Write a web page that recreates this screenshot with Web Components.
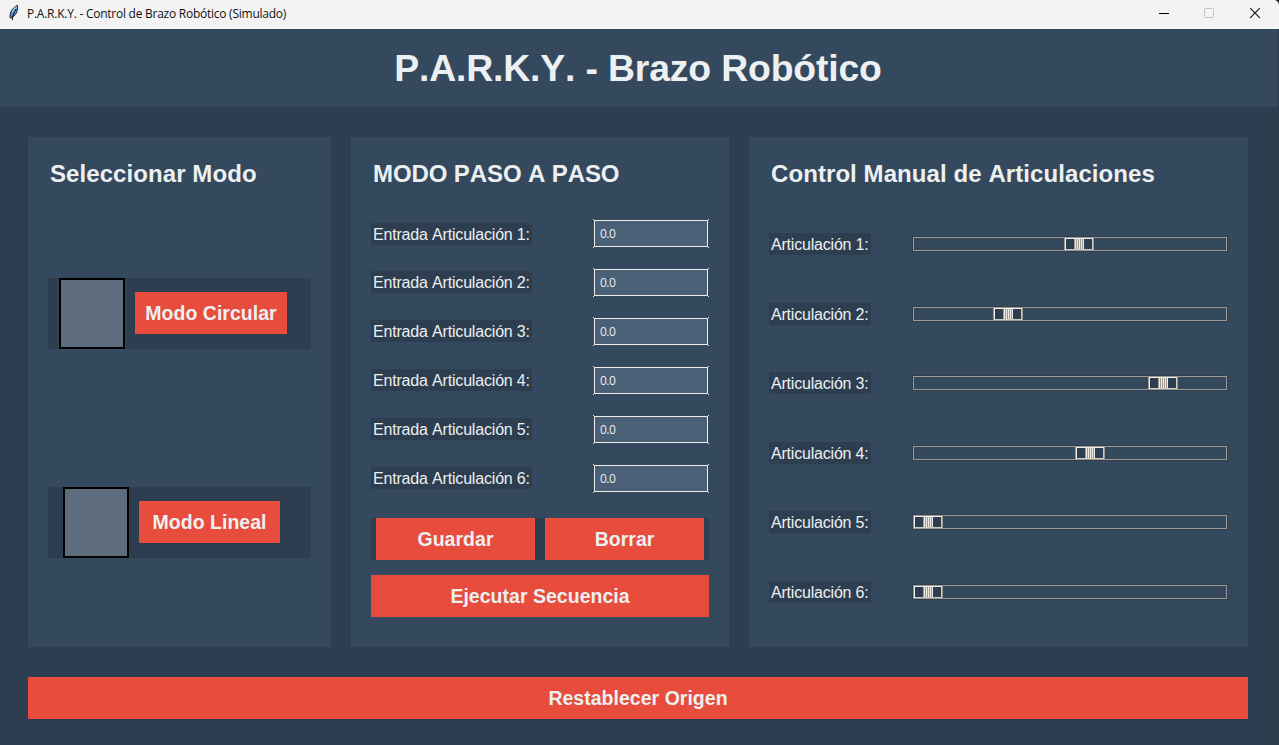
<!DOCTYPE html>
<html lang="es">
<head>
<meta charset="utf-8">
<title>P.A.R.K.Y. - Control de Brazo Robótico (Simulado)</title>
<style>
html,body{margin:0;height:100%;overflow:hidden;background:#2c3e50}
body{font-family:"Liberation Sans",Arial,sans-serif;color:#ecf0f1;font-kerning:none}
</style>
</head>
<body>
<parky-app></parky-app>
<script>
function define(name, html, setup) {
  const template = document.createElement('template');
  template.innerHTML = html;
  customElements.define(name, class extends HTMLElement {
    connectedCallback() {
      if (this.shadowRoot) return;
      this.attachShadow({ mode: 'open' }).append(template.content.cloneNode(true));
      if (setup) setup(this, this.shadowRoot);
    }
  });
}

define('window-bar', `
<style>
:host{display:flex;height:29px;background:#f3f3f3;color:#111;align-items:flex-start;font:12px/28px "Open Sans","Noto Sans",sans-serif;font-kerning:auto}
.feather{margin:4px 0 0 7px;width:14px;height:18px;flex:none}
.title{margin-left:6px;flex:1;white-space:nowrap;letter-spacing:-.25px}
.controls{width:124px;height:29px;flex:none}
</style>
<svg class="feather" viewBox="0 0 14 18"><path d="M3.2 14C2.500 10 4 5 10.300 1.300C11.500 5 9.500 10.500 5.500 13.300Z" fill="#4f94d8" stroke="#1d1d22" stroke-width="1"/><path d="M5.500 8.500C6.500 6 8 4 9.600 2.800" stroke="#a7d0f5" stroke-width="1.400" fill="none"/><path d="M5.300 16.200C5.400 12 7 8 9 5" stroke="#15151a" stroke-width="1" fill="none"/></svg>
<span class="title"><slot></slot></span>
<svg class="controls" viewBox="0 0 124 29"><path d="M4 13.500h10" stroke="#000"/><rect x="49.500" y="8.500" width="9" height="9" rx="1" fill="none" stroke="#c4c4c4"/><path d="M95.200 8.200l9.600 9.600m0-9.600l-9.600 9.600" stroke="#111" stroke-width="1.100"/><path d="M120 0h4v5Q123.500 1 120 0z" fill="#222"/></svg>
`);

define('app-header', `
<style>
:host{display:flex;height:78px;background:#34495e;align-items:center;justify-content:center;padding-right:3px}
h1{margin:0;font-size:37.33px;line-height:42px;white-space:nowrap;letter-spacing:-.15px}
</style><h1><slot></slot></h1>`);

define('card-panel', `
<style>
:host{display:flex;flex-direction:column;background:#34495e;padding:0 20px;box-sizing:border-box;height:510px}
h2{margin:23px 0 0 2px;height:28px;font-size:24px;line-height:28px;white-space:nowrap;letter-spacing:var(--heading-spacing,.08px)}
</style><h2><slot name="heading"></slot></h2><slot></slot>`);

define('red-button', `
<style>
:host{display:flex;box-sizing:border-box;height:42px;background:#e74c3c;align-items:center;justify-content:center;font-weight:bold;font-size:19.5px;line-height:22px;white-space:nowrap;letter-spacing:.02px}
</style><span><slot></slot></span>`);

define('mode-row', `
<style>
:host{display:flex;height:71px;box-sizing:border-box;background:#2c3e50;align-items:flex-start;gap:10px;padding-left:var(--inset,11px)}
.lamp{box-sizing:border-box;width:66px;height:71px;border:2px solid #000;background:#5d6d7e;flex:none}
::slotted(red-button){margin-top:14px}
</style><div class="lamp"></div><slot></slot>`);

define('dark-label', `
<style>
:host{display:block;box-sizing:border-box;height:22px;padding-left:2px;background:#2c3e50;font-size:16px;line-height:24px;white-space:nowrap}
</style><slot></slot>`);

define('entry-row', `
<style>
:host{display:flex;justify-content:space-between;height:29px;align-items:flex-start}
dark-label{width:161px;margin-top:var(--label-top,3px);letter-spacing:-.18px}
.entry{box-sizing:border-box;width:116px;height:29px;padding:1px;
background:linear-gradient(#ecf0f1,#ecf0f1) 0 0/1px 1px no-repeat,linear-gradient(#ecf0f1,#ecf0f1) 100% 0/1px 1px no-repeat,linear-gradient(#ecf0f1,#ecf0f1) 0 100%/1px 1px no-repeat,linear-gradient(#ecf0f1,#ecf0f1) 100% 100%/1px 1px no-repeat}
.field{box-sizing:border-box;height:27px;border:1px solid #f0ece6;background:#4a6077;padding-left:5px;font:12px/25px "Open Sans","Noto Sans",sans-serif;letter-spacing:-.5px}
</style><dark-label><slot></slot></dark-label><div class="entry"><div class="field">0.0</div></div>`);

define('joint-row', `
<style>
:host{display:flex;height:22px;justify-content:space-between;align-items:center}
dark-label{width:102px;letter-spacing:-.2px}
.track{box-sizing:border-box;width:316px;height:16px;border:1px solid #2c3e50}
.groove{box-sizing:border-box;height:14px;background:#34495e;box-shadow:inset 0 0 0 1px #9e9a91}
svg{display:block;width:30px;height:14px}
</style><dark-label><slot></slot></dark-label>
<div class="track"><div class="groove"><svg viewBox="0 0 30 14" shape-rendering="crispEdges"><path d="M0 0h30v14H0z" fill="#9e9a91"/><path d="M1 1h28v12H1z" fill="#cfcac2"/><path d="M1 1h28v1H2v11H1z" fill="#f0ece6"/><path d="M2 2h8v10H2zM20 2h8v10h-8z" fill="#2c3e50"/><path d="M10 2h10v10H10z" fill="#f0ece6"/><path d="M10 2h1v10h-1zM12 2h1v10h-1zM14 2h1v10h-1zM16 2h1v10h-1zM18 2h1v10h-1z" fill="#9e9a91"/></svg></div></div>`,
(el, root) => { root.querySelector('svg').style.marginLeft = el.getAttribute('offset') + 'px'; });

define('parky-app', `
<style>
:host{display:block;width:1279px;height:745px;background:#2c3e50;position:relative}
main{display:grid;grid-template-columns:303px 378px 499px;gap:30px 20px;padding:30px 31px 26px 28px}
.steps{--heading-spacing:-.1px}
.modes{display:grid;gap:138px;margin-top:90px}
.modes red-button{width:152px}
.modes .lineal{width:141px}
.modes mode-row:last-child{--inset:15px}
.entries{display:grid;gap:20px;margin-top:31px}
.entries entry-row:first-child{--label-top:4px}
.pair{display:grid;grid-template-columns:1fr 1fr;gap:10px;padding:0 5px;background:#2c3e50;margin:25px 0 15px}
.joints{display:grid;grid-template-rows:70px 69px 70px 69px 70px 22px;margin:45px 0 0;align-items:start}
.reset{grid-column:1/4}
.edge{position:absolute;right:0;top:29px;bottom:0;width:1px;background:#353c45}
</style>
<window-bar>P.A.R.K.Y. - Control de Brazo Robótico (Simulado)</window-bar>
<app-header>P.A.R.K.Y. - Brazo Robótico</app-header>
<main>
<card-panel><span slot="heading">Seleccionar Modo</span>
<div class="modes"><mode-row><red-button>Modo Circular</red-button></mode-row><mode-row><red-button class="lineal">Modo Lineal</red-button></mode-row></div></card-panel>
<card-panel class="steps"><span slot="heading">MODO PASO A PASO</span>
<div class="entries"><entry-row>Entrada Articulación 1:</entry-row><entry-row>Entrada Articulación 2:</entry-row><entry-row>Entrada Articulación 3:</entry-row><entry-row>Entrada Articulación 4:</entry-row><entry-row>Entrada Articulación 5:</entry-row><entry-row>Entrada Articulación 6:</entry-row></div>
<div class="pair"><red-button>Guardar</red-button><red-button>Borrar</red-button></div>
<red-button>Ejecutar Secuencia</red-button></card-panel>
<card-panel><span slot="heading">Control Manual de Articulaciones</span>
<div class="joints"><joint-row offset="151">Articulación 1:</joint-row><joint-row offset="80">Articulación 2:</joint-row><joint-row offset="235">Articulación 3:</joint-row><joint-row offset="162">Articulación 4:</joint-row><joint-row offset="0">Articulación 5:</joint-row><joint-row offset="0">Articulación 6:</joint-row></div></card-panel>
<red-button class="reset">Restablecer Origen</red-button>
</main>
<div class="edge"></div>`);
</script>
</body>
</html>
